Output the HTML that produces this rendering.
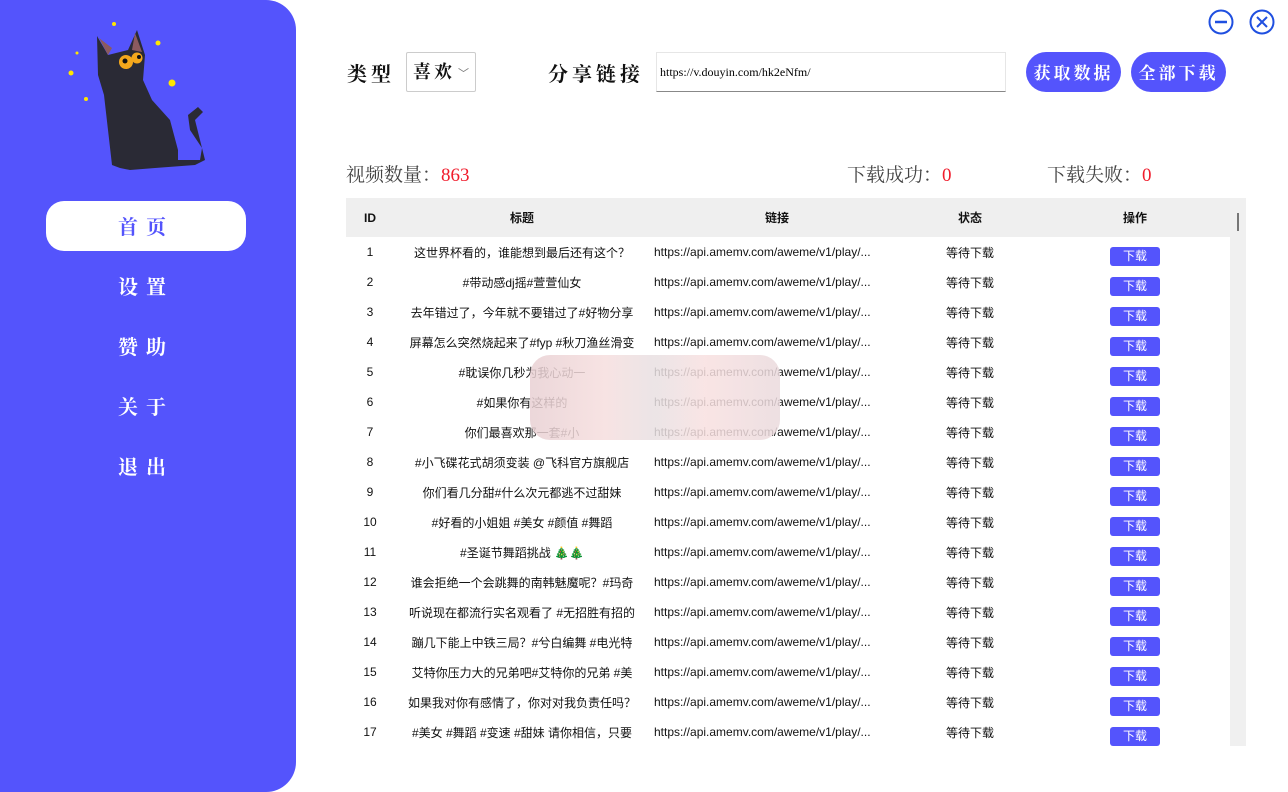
<!DOCTYPE html><html><head><meta charset="utf-8"><style>
*{margin:0;padding:0;box-sizing:border-box}
body{width:1288px;height:792px;background:#fff;position:relative;overflow:hidden;font-family:"Liberation Sans","Noto Sans CJK SC",sans-serif}
.side{position:absolute;left:0;top:0;width:296px;height:792px;background:#5454fc;border-radius:0 30px 30px 0}
.nav{position:absolute;left:46px;width:200px;height:50px;line-height:50px;text-align:center;color:#fff;font-size:20px;font-weight:bold;letter-spacing:8px;font-family:"Noto Serif CJK SC",serif}
.nav.a{background:#fff;color:#5454fc;border-radius:18px}
.lbl{position:absolute;font-family:"Noto Serif CJK SC",serif;font-weight:bold;font-size:20px;letter-spacing:4px;color:#111}
.btn{position:absolute;top:52px;height:40px;width:95px;background:#5454fc;color:#fff;border-radius:20px;text-align:center;line-height:40px;font-family:"Noto Serif CJK SC",serif;font-weight:bold;font-size:17px;letter-spacing:3px}
.stat{position:absolute;top:160px;font-size:19px;color:#444;font-family:"Noto Serif CJK SC",serif}
.stat b{color:#f01c2c;font-weight:normal;font-family:"Liberation Serif",serif}
.tbl{position:absolute;left:346px;top:198px;width:884px}
.row{height:30px;display:flex;font-size:12px;color:#111;align-items:center}
.hd{height:39px;background:#efefef;font-weight:bold;font-size:12px}
.c1{width:48px;text-align:center}.c2{width:256px;text-align:center;white-space:nowrap;overflow:hidden;text-overflow:ellipsis}.c3{width:250px;padding-left:4px;white-space:nowrap}.c4{width:140px;text-align:center}.c5{width:190px;text-align:center}
.dl{display:inline-block;width:50px;height:19px;background:#5454fc;color:#fff;border-radius:3px;line-height:19px;font-size:12px;margin-top:8px}
</style></head><body>
<div class="side">
<svg style="position:absolute;left:65px;top:20px" width="150" height="155" viewBox="65 20 150 155">
<path d="M97 36 L108 55 L128 50 L137 30 L145 55 L143 80 L152 100 L170 120 L178 150 L178 160 L200 160 L202 148 L190 130 L188 115 L198 107 L203 112 L195 120 L200 140 L205 160 L195 165 L155 168 L130 170 L120 168 L112 165 L108 130 L104 95 L98 75 Z" fill="#2a2a35"/>
<path d="M99 38 L108 55 L112 48 Z M135 33 L132 50 L142 52 Z" fill="#8b5a5f"/>
<circle cx="126" cy="62" r="7" fill="#f4a71c"/><circle cx="137" cy="58" r="5.5" fill="#f4a71c"/>
<circle cx="125" cy="61" r="2.5" fill="#111"/><circle cx="139" cy="57" r="2" fill="#111"/>
<g fill="#ffe600"><circle cx="114" cy="24" r="2"/><circle cx="77" cy="53" r="1.5"/><circle cx="71" cy="73" r="2.5"/><circle cx="86" cy="99" r="2"/><circle cx="158" cy="43" r="2.5"/><circle cx="172" cy="83" r="3.5"/></g>
</svg>
<div class="nav a" style="top:201px">首页</div>
<div class="nav" style="top:261px">设置</div>
<div class="nav" style="top:321px">赞助</div>
<div class="nav" style="top:381px">关于</div>
<div class="nav" style="top:441px">退出</div>
</div>
<svg style="position:absolute;left:1207px;top:8px" width="75" height="30"><circle cx="14" cy="14" r="11.5" fill="none" stroke="#1f4fe0" stroke-width="2"/><line x1="8" y1="14" x2="20" y2="14" stroke="#1f4fe0" stroke-width="2.5"/><circle cx="55" cy="14" r="11.5" fill="none" stroke="#1f4fe0" stroke-width="2"/><path d="M50 9 L60 19 M60 9 L50 19" stroke="#1f4fe0" stroke-width="2"/></svg>
<div class="lbl" style="left:347px;top:58px">类型</div>
<div style="position:absolute;left:406px;top:52px;width:70px;height:40px;border:1px solid #ccc;border-radius:2px"><span class="lbl" style="left:6px;top:5px;font-size:18px;letter-spacing:3px">喜欢</span><span style="position:absolute;right:6px;top:12px;font-size:11px;color:#777">﹀</span></div>
<div class="lbl" style="left:548px;top:58px">分享链接</div>
<div style="position:absolute;left:656px;top:52px;width:350px;height:40px;border:1px solid #e6e6e6;border-bottom:1px solid #888;font-family:'Liberation Serif',serif;font-size:12px;line-height:38px;padding-left:3px">https://v.douyin.com/hk2eNfm/</div>
<div class="btn" style="left:1026px">获取数据</div>
<div class="btn" style="left:1131px">全部下载</div>
<div class="stat" style="left:346px">视频数量：<b>863</b></div>
<div class="stat" style="left:847px">下载成功：<b>0</b></div>
<div class="stat" style="left:1047px">下载失败：<b>0</b></div>
<div style="position:absolute;left:1230px;top:198px;width:16px;height:548px;background:#f0f0f0"><div style="position:absolute;left:7px;top:15px;width:2px;height:18px;background:#777"></div></div>
<div class="tbl">
<div class="row hd"><div class="c1">ID</div><div class="c2">标题</div><div class="c3" style="text-align:center">链接</div><div class="c4">状态</div><div class="c5">操作</div></div>
<div id="rows"></div>
</div>
<div style="position:absolute;left:530px;top:355px;width:250px;height:85px;background:linear-gradient(90deg,#e8d0d3,#f6dede 30%,#e8e0e2 50%,#f8e0e0 70%,#eadadd);opacity:.85;border-radius:20px"></div>
<script>
var t=["这世界杯看的，谁能想到最后还有这个？","#带动感dj摇#萱萱仙女","去年错过了，今年就不要错过了#好物分享","屏幕怎么突然烧起来了#fyp #秋刀渔丝滑变","#耽误你几秒为我心动一","#如果你有这样的","你们最喜欢那一套#小","#小飞碟花式胡须变装 @飞科官方旗舰店","你们看几分甜#什么次元都逃不过甜妹","#好看的小姐姐 #美女 #颜值 #舞蹈","#圣诞节舞蹈挑战 🎄🎄","谁会拒绝一个会跳舞的南韩魅魔呢？#玛奇","听说现在都流行实名观看了 #无招胜有招的","蹦几下能上中铁三局？#兮白编舞 #电光特","艾特你压力大的兄弟吧#艾特你的兄弟 #美","如果我对你有感情了，你对对我负责任吗？","#美女 #舞蹈 #变速 #甜妹 请你相信，只要"];
var h="";t.forEach(function(s,i){h+='<div class="row"><div class="c1">'+(i+1)+'</div><div class="c2">'+s+'</div><div class="c3">https://api.amemv.com/aweme/v1/play/...</div><div class="c4">等待下载</div><div class="c5"><span class="dl">下载</span></div></div>'});
document.getElementById("rows").innerHTML=h;
</script>
</body></html>
